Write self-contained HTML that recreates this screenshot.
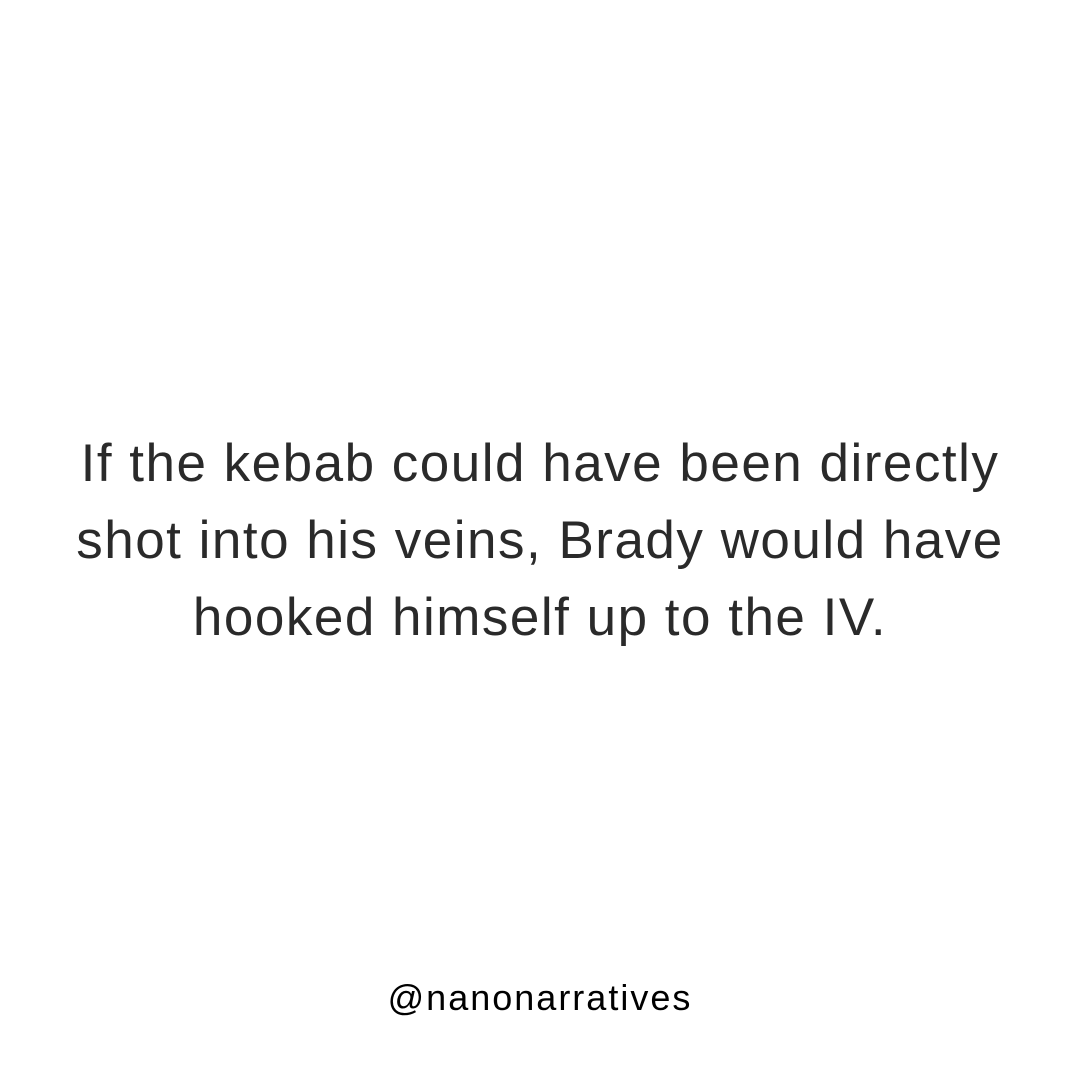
<!DOCTYPE html>
<html><head><meta charset="utf-8"><style>
html,body{margin:0;padding:0;background:#fff;}
body{width:1080px;height:1080px;position:relative;overflow:hidden;font-family:"Liberation Sans",sans-serif;color:#111;}
.main{position:absolute;left:0;width:1080px;top:425px;text-align:center;font-size:53px;line-height:77px;font-weight:normal;color:#2a2a2a;letter-spacing:1.5px;}
.handle{position:absolute;left:0;width:1080px;top:974px;text-align:center;font-size:36px;line-height:48px;color:#000;letter-spacing:2px;}
</style></head><body>
<div class="main">If the kebab could have been directly<br>shot into his veins, Brady would have<br>hooked himself up to the IV.</div>
<div class="handle">@nanonarratives</div>
</body></html>
